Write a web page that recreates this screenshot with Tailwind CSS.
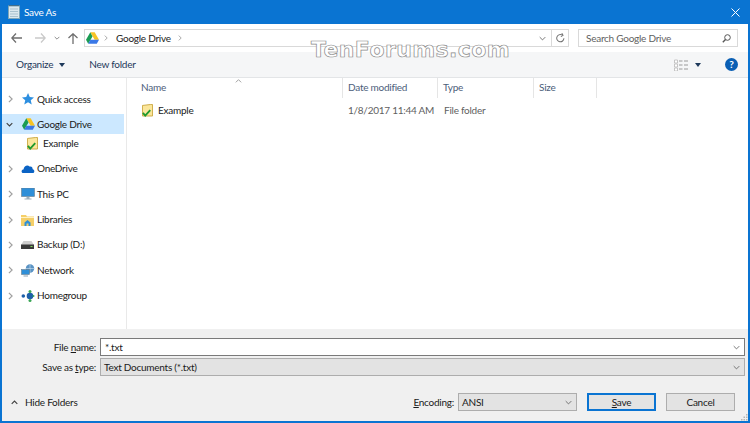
<!DOCTYPE html>
<html lang="en">
  <head>
    <meta charset="UTF-8" />
    <title>Save As</title>
    <script src="https://cdn.jsdelivr.net/npm/@tailwindcss/browser@4"></script>
  </head>

  <body class="overflow-hidden">
    <svg class="hidden" xmlns="http://www.w3.org/2000/svg">
      <symbol id="drive" viewBox="0 0 16 14">
        <path d="M5.300 0h5.400l5.300 9h-5.400z" fill="#f7c325" />
        <path d="M5.300 0 0 9l2.700 5 5.300-9z" fill="#1a9c54" />
        <path d="M2.700 14h10.600l2.700-5H5.400z" fill="#3b78e7" />
      </symbol>
      <symbol id="syncfolder" viewBox="0 0 12 14">
        <path d="M.5 1.500 9 .5h2.500v12.500H.5z" fill="#fbe69b" stroke="#c9a63e" />
        <path d="M1 9.500l2.500 3L9 6.500" fill="none" stroke="#1f9a2d" stroke-width="2" />
      </symbol>
      <symbol id="chev" viewBox="0 0 6 10">
        <path d="M1 1l4 4-4 4" fill="none" stroke="#a0a0a0" stroke-width="1.500" />
      </symbol>
      <symbol id="down" viewBox="0 0 10 6">
        <path d="M1 1l4 4 4-4" fill="none" stroke="#606060" stroke-width="1.200" />
      </symbol>
    </svg>

    <div class="relative w-[750px] h-[423px] flex flex-col bg-white border-x-2 border-b-2 border-[#0a74d2] font-['Lato',sans-serif] text-[10px] tracking-[-0.25px] text-[#1a1a1a]">
      <!-- Title bar -->
      <header class="h-6 -mx-[2px] bg-[#0a74d2] flex items-center text-white shrink-0">
        <svg class="ml-2 w-[12px] h-[14px]" viewBox="0 0 12 14">
          <rect x="0.5" y="1" width="11" height="12.500" fill="#dce8ee" stroke="#7fa6b8" />
          <path d="M2 4h8M2 6.500h8M2 9h8M2 11.500h8" stroke="#a9c2cf" />
          <path d="M1 .5h10" stroke="#45708a" />
        </svg>
        <span class="ml-[4px]">Save As</span>
        <svg class="ml-auto mr-[10px] w-[9px] h-[9px]" viewBox="0 0 9 9">
          <path d="M.5.5l8 8M8.500.5l-8 8" stroke="#fff" stroke-width="1" />
        </svg>
      </header>

      <!-- Address row -->
      <div class="h-[28px] flex items-center shrink-0">
        <svg class="ml-[9px] w-[11px] h-[10px]" viewBox="0 0 11 10">
          <path d="M5 .5.800 5 5 9.500M1 5h10" fill="none" stroke="#6e6e6e" stroke-width="1.300" />
        </svg>
        <svg class="ml-[13px] w-[11px] h-[10px]" viewBox="0 0 11 10">
          <path d="M6 .5 10.200 5 6 9.500M10 5H0" fill="none" stroke="#c9c9c9" stroke-width="1.300" />
        </svg>
        <svg class="ml-[8px] w-[6px] h-[4px]" viewBox="0 0 10 6"><use href="#down" /></svg>
        <svg class="ml-[8px] w-[10px] h-[11px]" viewBox="0 0 10 11">
          <path d="M.5 5 5 .8 9.500 5M5 1v10" fill="none" stroke="#6e6e6e" stroke-width="1.300" />
        </svg>
        <div class="ml-[6px] w-[485px] h-[18px] border border-[#d9d9d9] flex items-center">
          <svg class="ml-[1px] w-[13px] h-[12px]"><use href="#drive" /></svg>
          <svg class="ml-[5px] w-[4px] h-[6px]"><use href="#chev" /></svg>
          <span class="ml-[8px]">Google Drive</span>
          <svg class="ml-[7px] w-[4px] h-[6px]"><use href="#chev" /></svg>
          <svg class="ml-auto mr-[5px] w-[7px] h-[5px]"><use href="#down" /></svg>
          <div class="w-[17px] h-full border-l border-[#d9d9d9] flex items-center justify-center">
            <svg class="w-[9px] h-[10px]" viewBox="0 0 9 10">
              <path d="M6.500 2.200A3.600 3.600 0 1 1 2.500 2.300M1 1.500h2.500v2.500" fill="none" stroke="#707070" stroke-width="1" transform="rotate(60 4.500 5)" />
            </svg>
          </div>
        </div>
        <div class="ml-[9px] w-[160px] h-[18px] border border-[#d9d9d9] flex items-center pl-[7px] text-[#5f5f5f]">
          <span>Search Google Drive</span>
          <svg class="ml-auto mr-[6px] w-[9px] h-[9px]" viewBox="0 0 9 9">
            <circle cx="5.500" cy="3.500" r="2.800" fill="none" stroke="#555" />
            <path d="M3.500 5.500.8 8.200" stroke="#555" stroke-width="1.400" />
          </svg>
        </div>
      </div>

      <!-- Toolbar -->
      <div class="h-[26px] bg-[#f5f6f7] border-b border-[#e3e5e7] flex items-center text-[#1e395b] shrink-0">
        <span class="ml-[14px]">Organize</span>
        <span class="ml-[6px] w-0 h-0 border-x-[3.500px] border-x-transparent border-t-[4px] border-t-[#1e395b]"></span>
        <span class="ml-[24px]">New folder</span>
        <svg class="ml-auto w-[14px] h-[12px]" viewBox="0 0 14 12">
          <path d="M.5 1h3v3h-3zM.5 5h3v3h-3zM.5 9h3v3h-3z" fill="#fff" stroke="#b9b9b9" stroke-width=".8" />
          <path d="M5 2h3.500M10 2h4M5 6h3.500M10 6h4M5 10h3.500M10 10h4" stroke="#9a9a9a" />
        </svg>
        <span class="ml-[7px] w-0 h-0 border-x-[3.500px] border-x-transparent border-t-[4px] border-t-[#1e395b]"></span>
        <span class="ml-[24px] mr-[10px] w-[13px] h-[13px] rounded-full bg-[#0a5fb4] text-white font-bold text-[10px] leading-[13px] text-center">?</span>
      </div>

      <!-- Main area -->
      <div class="flex flex-1 min-h-0">
        <!-- Sidebar -->
        <nav class="w-[125px] border-r border-[#e9e9e9] pt-[11px] flex flex-col gap-[5.400px] shrink-0">
          <div class="h-5 flex items-center">
            <svg class="ml-[6px] w-[5px] h-[8px]"><use href="#chev" /></svg>
            <svg class="ml-[8px] w-[13px] h-[13px]" viewBox="0 0 12 12">
              <path d="M6.500 0l1.600 3.800 3.900.3-3 2.600.9 4L6.500 8.600 3 10.700l.9-4-3-2.600 3.900-.3z" fill="#2d8fe0" />
            </svg>
            <span class="ml-[3px]">Quick access</span>
          </div>
          <div class="flex flex-col">
            <div class="h-5 w-[122px] bg-[#cce8ff] flex items-center">
              <svg class="ml-[4px] w-[7px] h-[5px]" viewBox="0 0 10 6">
                <path d="M1 1l4 4 4-4" fill="none" stroke="#404040" stroke-width="1.600" />
              </svg>
              <svg class="ml-[9px] w-[13px] h-[12px]"><use href="#drive" /></svg>
              <span class="ml-[2px]">Google Drive</span>
            </div>
            <div class="h-[19px] flex items-center">
              <svg class="ml-[25px] w-[11px] h-[13px]"><use href="#syncfolder" /></svg>
              <span class="ml-[5px]">Example</span>
            </div>
          </div>
          <div class="h-5 flex items-center">
            <svg class="ml-[6px] w-[5px] h-[8px]"><use href="#chev" /></svg>
            <svg class="ml-[8px] w-[14px] h-[9px]" viewBox="0 0 13 9">
              <path d="M1 9C-.5 8 0 5.500 2 5.500 2.500 2 6 .5 8 2.500 10.500 2 11.500 4 11 5c2 .5 2.500 3 1 4z" fill="#0b63c4" />
            </svg>
            <span class="ml-[2px]">OneDrive</span>
          </div>
          <div class="h-5 flex items-center">
            <svg class="ml-[6px] w-[5px] h-[8px]"><use href="#chev" /></svg>
            <svg class="ml-[8px] w-[14px] h-[12px]" viewBox="0 0 13 12">
              <rect x="0" y="0" width="13" height="8.500" fill="#2f8fd8" stroke="#6b7d8c" stroke-width=".6" />
              <path d="M5 9h3v1.500H5zM3 10.500h7v1H3z" fill="#9fb0bc" />
            </svg>
            <span class="ml-[2px]">This PC</span>
          </div>
          <div class="h-5 flex items-center">
            <svg class="ml-[6px] w-[5px] h-[8px]"><use href="#chev" /></svg>
            <svg class="ml-[8px] w-[13px] h-[12px]" viewBox="0 0 13 12">
              <path d="M0 1h5l1 1.500h7V12H0z" fill="#f5cf68" />
              <path d="M0 3.500h13" stroke="#fff2c4" />
              <path d="M3.500 12V8.500L6.500 6l3 2.500V12h-2V9.500h-2V12z" fill="#2f8fd8" />
            </svg>
            <span class="ml-[3px]">Libraries</span>
          </div>
          <div class="h-5 flex items-center">
            <svg class="ml-[6px] w-[5px] h-[8px]"><use href="#chev" /></svg>
            <svg class="ml-[8px] w-[13px] h-[8px]" viewBox="0 0 13 8">
              <path d="M2.500 0h8L13 4H0z" fill="#cfcfcf" />
              <rect x="0" y="3.500" width="13" height="4.500" fill="#3a3a3a" />
              <path d="M9.500 5.500h2" stroke="#7fdc5a" />
            </svg>
            <span class="ml-[3px]">Backup (D:)</span>
          </div>
          <div class="h-5 flex items-center">
            <svg class="ml-[6px] w-[5px] h-[8px]"><use href="#chev" /></svg>
            <svg class="ml-[8px] w-[14px] h-[13px]" viewBox="0 0 13 13">
              <circle cx="8.500" cy="4.500" r="4.200" fill="#5a93c4" />
              <path d="M4.500 4.500h8M8.500.5v8" stroke="#cfe2f1" stroke-width=".6" />
              <rect x="0" y="5.500" width="8" height="5" fill="#2f8fd8" stroke="#6b7d8c" stroke-width=".6" />
              <path d="M2 11.500h4.500v1H2z" fill="#8fa3b3" />
            </svg>
            <span class="ml-[2px]">Network</span>
          </div>
          <div class="h-5 flex items-center">
            <svg class="ml-[6px] w-[5px] h-[8px]"><use href="#chev" /></svg>
            <svg class="ml-[8px] w-[14px] h-[12px]" viewBox="0 0 13 12">
              <circle cx="1.800" cy="6" r="1.800" fill="#1c5fa8" />
              <circle cx="8.500" cy="6" r="3.300" fill="#1c5fa8" />
              <circle cx="8.500" cy="1.500" r="1.500" fill="#3aa655" />
              <circle cx="8.500" cy="10.500" r="1.500" fill="#3aa655" />
              <circle cx="12" cy="6" r="1" fill="#3aa655" />
            </svg>
            <span class="ml-[2px]">Homegroup</span>
          </div>
        </nav>

        <!-- File list -->
        <main class="relative flex-1 min-w-0">
          <div class="flex h-5 items-center text-[#4c607a]">
            <div class="w-[216px] h-full border-r border-[#e5e5e5] pl-[14px] leading-[19px]">Name</div>
            <div class="w-[95px] h-full border-r border-[#e5e5e5] pl-[5px] leading-[19px]">Date modified</div>
            <div class="w-[96px] h-full border-r border-[#e5e5e5] pl-[5px] leading-[19px]">Type</div>
            <div class="w-[63px] h-full border-r border-[#e5e5e5] pl-[5px] leading-[19px]">Size</div>
          </div>
          <svg class="absolute left-[108px] top-[1px] w-[7px] h-[4px]" viewBox="0 0 10 6">
            <path d="M1 5l4-4 4 4" fill="none" stroke="#8c8c8c" stroke-width="1.200" />
          </svg>
          <div class="flex items-center h-5 mt-[2px]">
            <div class="w-[216px] flex items-center pl-[15px]">
              <svg class="w-[11px] h-[13px]"><use href="#syncfolder" /></svg>
              <span class="ml-[5px]">Example</span>
            </div>
            <div class="w-[95px] pl-[5px] text-[#5f5f5f] whitespace-nowrap">1/8/2017 11:44 AM</div>
            <div class="w-[96px] pl-[6px] text-[#5f5f5f]">File folder</div>
          </div>
        </main>
      </div>

      <!-- Bottom panel -->
      <div class="h-[92px] bg-[#f0f0f0] shrink-0 flex flex-col pt-[9px]">
        <div class="flex items-center h-[18px]">
          <label class="w-[94px] text-right">File <u>n</u>ame:</label>
          <div class="ml-[4px] w-[645px] h-[18px] bg-white border border-[#7a7a7a] flex items-center pl-[4px]">
            <span>*.txt</span>
            <svg class="ml-auto mr-[4px] w-[7px] h-[5px]"><use href="#down" /></svg>
          </div>
        </div>
        <div class="flex items-center h-[18px] mt-[2px]">
          <label class="w-[94px] text-right">Save as <u>t</u>ype:</label>
          <div class="ml-[4px] w-[645px] h-[18px] bg-[#e3e3e3] border border-[#adadad] flex items-center pl-[3px]">
            <span>Text Documents (*.txt)</span>
            <svg class="ml-auto mr-[4px] w-[7px] h-[5px]"><use href="#down" /></svg>
          </div>
        </div>
        <div class="flex items-center mt-[17px] h-[18px]">
          <svg class="ml-[9px] w-[7px] h-[5px]" viewBox="0 0 10 6">
            <path d="M1 5l4-4 4 4" fill="none" stroke="#404040" stroke-width="1.600" />
          </svg>
          <span class="ml-[7px]">Hide Folders</span>
          <label class="ml-auto"><u>E</u>ncoding:</label>
          <div class="ml-[4px] w-[119px] h-[18px] bg-[#e3e3e3] border border-[#adadad] flex items-center pl-[3px]">
            <span>ANSI</span>
            <svg class="ml-auto mr-[4px] w-[7px] h-[5px]"><use href="#down" /></svg>
          </div>
          <button class="ml-[10px] w-[69px] h-[18px] bg-[#e3e3e3] border-2 border-[#0a74d2] flex items-center justify-center"><span><u>S</u>ave</span></button>
          <button class="ml-[10px] w-[69px] h-[18px] mr-[13px] bg-[#e3e3e3] border border-[#adadad] flex items-center justify-center">Cancel</button>
        </div>
      </div>

      <!-- Resize grip -->
      <svg class="absolute right-0 bottom-0 w-[7px] h-[7px]" viewBox="0 0 7 7">
        <path d="M5 0h1.500v1.500H5zM2.500 2.500H4V4H2.500zM5 2.500h1.500V4H5zM0 5h1.500v1.500H0zM2.500 5H4v1.500H2.500zM5 5h1.500v1.500H5z" fill="#b5b5b5" />
      </svg>

      <!-- Watermark -->
      <div class="absolute left-[309px] top-[36px] text-[22px] leading-7 font-bold tracking-[0.4px] whitespace-nowrap text-white [-webkit-text-stroke:0.7px_#8a8a8a] font-['DejaVu_Sans',sans-serif]">TenForums.com</div>
    </div>
  </body>
</html>
